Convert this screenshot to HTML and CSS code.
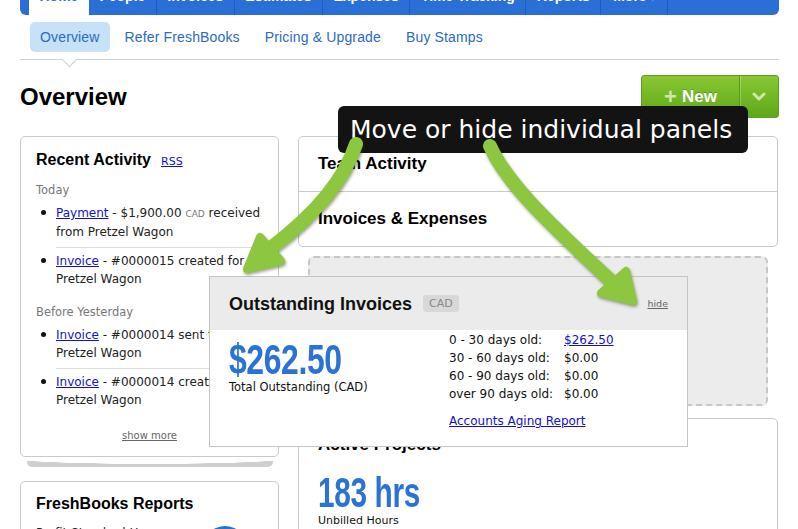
FILE: index.html
```html
<!DOCTYPE html>
<html>
<head>
<meta charset="utf-8">
<title>FreshBooks Overview</title>
<link rel="stylesheet" href="styles.css">
</head>
<body>
<div class="page">
  <nav class="topnav">
    <a class="tab tab-home">Home</a>
    <a class="tab">People</a>
    <a class="tab">Invoices</a>
    <a class="tab">Estimates</a>
    <a class="tab">Expenses</a>
    <a class="tab">Time Tracking</a>
    <a class="tab">Reports</a>
    <a class="tab tab-more">More <span class="caret">▾</span></a>
  </nav>

  <div class="subnav">
    <a class="sub sub-active">Overview</a>
    <a class="sub">Refer FreshBooks</a>
    <a class="sub">Pricing &amp; Upgrade</a>
    <a class="sub">Buy Stamps</a>
    <span class="notch"></span>
  </div>

  <div class="header">
    <h1 class="title">Overview</h1>
    <div class="new-btn">
      <span class="new-main"><span class="plus">+</span>New</span>
      <span class="new-drop">
        <svg width="14" height="9" viewBox="0 0 14 9"><path d="M2 2 L7 7 L12 2" fill="none" stroke="#cde8a3" stroke-width="3" stroke-linecap="round" stroke-linejoin="round"/></svg>
      </span>
    </div>
  </div>

  <div class="columns">
    <div class="col-left">
      <section class="panel recent">
        <div class="panel-head">
          <h2 class="ptitle">Recent Activity</h2>
          <a class="rss">RSS</a>
        </div>
        <div class="day">Today</div>
        <ul class="acts">
          <li><a>Payment</a> - $1,900.00 <span class="cur">CAD</span> received from Pretzel Wagon</li>
          <li><a>Invoice</a> - #0000015 created for Pretzel Wagon</li>
        </ul>
        <div class="day day-gap">Before Yesterday</div>
        <ul class="acts">
          <li><a>Invoice</a> - #0000014 sent to Pretzel Wagon</li>
          <li><a>Invoice</a> - #0000014 created for Pretzel Wagon</li>
        </ul>
        <div class="more"><a>show more</a></div>
      </section>
      <div class="curl"></div>

      <section class="panel reports">
        <h2 class="ptitle">FreshBooks Reports</h2>
        <div class="rep-body">
          <p class="rep-text">Profit Standard Hours Tracked</p>
          <div class="pie"></div>
        </div>
      </section>
    </div>

    <div class="col-right">
      <div class="panel stack">
        <div class="row"><h2 class="rtitle">Team Activity</h2></div>
        <div class="row"><h2 class="rtitle">Invoices &amp; Expenses</h2></div>
      </div>
      <div class="placeholder"></div>
      <section class="panel projects">
        <h2 class="rtitle">Active Projects</h2>
        <div class="bignum bignum-hrs">183 hrs</div>
        <div class="sublabel">Unbilled Hours</div>
      </section>
    </div>
  </div>
</div>

<section class="floating">
  <div class="f-head">
    <h2 class="ftitle">Outstanding Invoices</h2>
    <span class="badge">CAD</span>
    <a class="hide">hide</a>
  </div>
  <div class="f-body">
    <div class="f-left">
      <div class="bignum bignum-money">$262.50</div>
      <div class="sublabel sublabel-total">Total Outstanding (CAD)</div>
    </div>
    <div class="f-right">
      <div class="aging">
        <span>0 - 30 days old:</span><a>$262.50</a>
        <span>30 - 60 days old:</span><span>$0.00</span>
        <span>60 - 90 days old:</span><span>$0.00</span>
        <span>over 90 days old:</span><span>$0.00</span>
      </div>
      <a class="aging-link">Accounts Aging Report</a>
    </div>
  </div>
</section>

<div class="tip">Move or hide individual panels</div>

<svg class="arrows" width="798" height="529" viewBox="0 0 798 529">
  <g fill="#8dc63f" stroke="#8dc63f" stroke-linejoin="round" stroke-linecap="round">
    <path d="M356 144 C345 178 318 212 272 247" fill="none" stroke-width="14"/>
    <polygon points="247,269 260,237 281,261" stroke-width="8"/>
    <path d="M490 146 C505 180 540 215 610 280" fill="none" stroke-width="14"/>
    <polygon points="633,301 601,293 626,271" stroke-width="8"/>
  </g>
</svg>
</body>
</html>
```

FILE: styles.css
```css
html, body {
  margin: 0;
  padding: 0;
}

body {
  position: relative;
  width: 798px;
  height: 529px;
  overflow: hidden;
  background: #fff;
  font-family: "DejaVu Sans", Verdana, sans-serif;
  color: #222;
}

a {
  color: inherit;
  text-decoration: none;
}

.page {
  width: 759px;
  margin-left: 20px;
}

/* top navigation */
.topnav {
  display: flex;
  height: 15px;
  padding-left: 9px;
  background: #2a6fd6;
  border-radius: 0 0 6px 6px;
  overflow: hidden;
}

.tab {
  display: block;
  margin-top: -19px;
  height: 34px;
  padding: 0 10.5px;
  font: bold 14px/30px "Liberation Sans", Arial, sans-serif;
  color: #fff;
  white-space: nowrap;
  border-right: 1px solid #1c5cbf;
}

.tab-home {
  background: #fff;
  color: #2a6fd6;
  border-right: 0;
  padding: 0 10.5px;
}

.tab-more {
  padding: 0 12px;
}

.caret {
  font-family: "DejaVu Sans", sans-serif;
  font-size: 9px;
  opacity: 0.6;
}

/* sub navigation */
.subnav {
  position: relative;
  display: flex;
  gap: 5px;
  margin-top: 7px;
  padding: 0 0 7px 10px;
  border-bottom: 1px solid #cfcfcf;
}

.sub {
  display: block;
  height: 30px;
  padding: 0 10px;
  font: 14px/30px "Liberation Sans", Arial, sans-serif;
  letter-spacing: 0.15px;
  color: #2b6bc4;
  border-radius: 5px;
}

.sub-active {
  background: #c6e1f8;
}

.notch {
  position: absolute;
  left: 44px;
  top: 32px;
  width: 10px;
  height: 10px;
  background: #fff;
  border-right: 1px solid #cfcfcf;
  border-bottom: 1px solid #cfcfcf;
  transform: rotate(45deg);
}

/* header */
.header {
  display: flex;
  justify-content: space-between;
  align-items: center;
  margin-top: 15px;
}

.title {
  margin: 0;
  font: bold 24px/28px "Liberation Sans", Arial, sans-serif;
  color: #000;
}

.new-btn {
  display: flex;
  width: 138px;
  height: 43px;
  box-sizing: border-box;
  border: 1px solid #5c9e1e;
  border-radius: 3px;
  background: linear-gradient(#88c732, #5fa81b);
}

.new-main {
  flex: 1;
  display: flex;
  align-items: center;
  justify-content: center;
  font: bold 17px "Liberation Sans", Arial, sans-serif;
  color: #fff;
  text-shadow: 0 -1px 0 rgba(0, 0, 0, 0.2);
  border-right: 1px solid #5a9a1d;
  box-shadow: 1px 0 0 rgba(255, 255, 255, 0.25);
}

.plus {
  color: #cde8a3;
  font-size: 22px;
  margin-right: 5px;
  text-shadow: none;
}

.new-drop {
  width: 38px;
  display: flex;
  align-items: center;
  justify-content: center;
}

/* columns */
.columns {
  display: flex;
  align-items: flex-start;
  gap: 19px;
  margin-top: 18px;
}

.col-left {
  width: 259px;
}

.col-right {
  width: 480px;
}

.panel {
  border: 1px solid #c9c9c9;
  border-radius: 5px;
  background: #fff;
}

.recent {
  padding: 13px 15px 13px;
}

.panel-head {
  display: flex;
  align-items: baseline;
  gap: 10px;
}

.ptitle {
  margin: 0;
  font: bold 16px/20px "Liberation Sans", Arial, sans-serif;
  color: #000;
}

.rss {
  font-size: 11px;
  color: #1111cc;
  text-decoration: underline;
}

.day {
  margin-top: 11px;
  font-size: 11.5px;
  line-height: 18px;
  color: #777;
}

.day-gap {
  margin-top: 15px;
}

.acts {
  margin: 5px 0 0;
  padding: 0 0 0 20px;
  list-style: none;
  font-size: 12px;
  line-height: 18px;
}

.acts li {
  padding: 4px 0 6px;
  border-bottom: 1px solid #dedede;
}

.acts li::before {
  content: "";
  display: inline-block;
  width: 5px;
  height: 5px;
  margin: 0 10px 2px -15px;
  border-radius: 50%;
  background: #111;
  vertical-align: middle;
}

.acts li:first-child {
  padding-top: 0;
}

.acts li:last-child {
  padding-bottom: 0;
  border-bottom: 0;
}

.acts a {
  color: #1111cc;
  text-decoration: underline;
}

.cur {
  font-size: 9px;
  color: #777;
}

.more {
  margin-top: 20px;
  text-align: center;
  font-size: 10px;
  line-height: 14px;
}

.more a {
  color: #666;
  text-decoration: underline;
}

.curl {
  height: 9px;
  margin: 1px 6px 0 7px;
  border-radius: 0 0 5px 5px;
  background: radial-gradient(ellipse 58% 6px at 50% 0, #fff 95%, rgba(255, 255, 255, 0) 100%), #cfcfcf;
}

.reports {
  margin-top: 14px;
  padding: 12px 15px;
  min-height: 80px;
}

.rep-body {
  display: flex;
  justify-content: space-between;
  margin-top: 10px;
}

.rep-text {
  margin: 0;
  width: 150px;
  font-size: 12px;
  line-height: 18px;
}

.pie {
  width: 44px;
  height: 44px;
  margin: 2px 16px 0 0;
  border-radius: 50%;
  background: #2a72d2;
}

/* right column */
.stack .row {
  display: flex;
  align-items: center;
  height: 54px;
  padding: 0 19px;
}

.stack .row + .row {
  border-top: 1px solid #c9c9c9;
}

.rtitle {
  margin: 0;
  font: bold 17px/20px "Liberation Sans", Arial, sans-serif;
  color: #000;
}

.placeholder {
  height: 146px;
  margin: 9px 10px 0;
  border: 2px dashed #c6c6c6;
  border-radius: 6px;
  background: #ececec;
}

.projects {
  margin-top: 12px;
  padding: 16px 19px 0;
  height: 200px;
}

.bignum {
  font: bold 42px/42px "Liberation Sans", Arial, sans-serif;
  color: #2a72d4;
  letter-spacing: -0.5px;
  white-space: nowrap;
  transform-origin: 0 50%;
}

.bignum-money {
  transform: scaleX(0.76);
}

.bignum-hrs {
  transform: scaleX(0.71);
}

.projects .bignum {
  margin-top: 17px;
}

.sublabel {
  margin-top: 0;
  font-size: 11px;
  line-height: 14px;
  color: #111;
}

.sublabel-total {
  font-size: 11.5px;
  margin-top: -1px;
}

/* floating dragged panel */
.floating {
  position: absolute;
  left: 209px;
  top: 276px;
  width: 477px;
  height: 169px;
  border: 1px solid #c4c4c4;
  background: #fff;
}

.f-head {
  display: flex;
  align-items: center;
  height: 53px;
  padding: 0 19px;
  background: #ebebeb;
}

.ftitle {
  margin: 0;
  font: bold 18px/20px "Liberation Sans", Arial, sans-serif;
  color: #111;
}

.badge {
  margin-left: 11px;
  padding: 0 6px;
  height: 17px;
  line-height: 17px;
  font-size: 11px;
  color: #888;
  background: #d8d8d8;
  border-radius: 3px;
}

.hide {
  margin-left: auto;
  font-size: 9.5px;
  color: #666;
  text-decoration: underline;
}

.f-body {
  display: flex;
  padding: 1px 19px 16px;
}

.f-left {
  width: 220px;
  padding-top: 8px;
}

.aging {
  display: grid;
  grid-template-columns: 115px auto;
  font-size: 12px;
  line-height: 18px;
  color: #111;
}

.aging a,
.aging-link {
  color: #1111cc;
  text-decoration: underline;
}

.aging-link {
  display: inline-block;
  margin-top: 9px;
  font-size: 12px;
  line-height: 18px;
}

/* tooltip + arrows */
.tip {
  position: absolute;
  left: 338px;
  top: 106px;
  width: 410px;
  height: 47px;
  box-sizing: border-box;
  padding-left: 12px;
  background: #131313;
  color: #fff;
  border-radius: 6px;
  font: 25px/47px "DejaVu Sans", sans-serif;
  white-space: nowrap;
}

.arrows {
  position: absolute;
  left: 0;
  top: 0;
  pointer-events: none;
  filter: drop-shadow(1px 2px 1.5px rgba(40, 60, 0, 0.45));
}
```
